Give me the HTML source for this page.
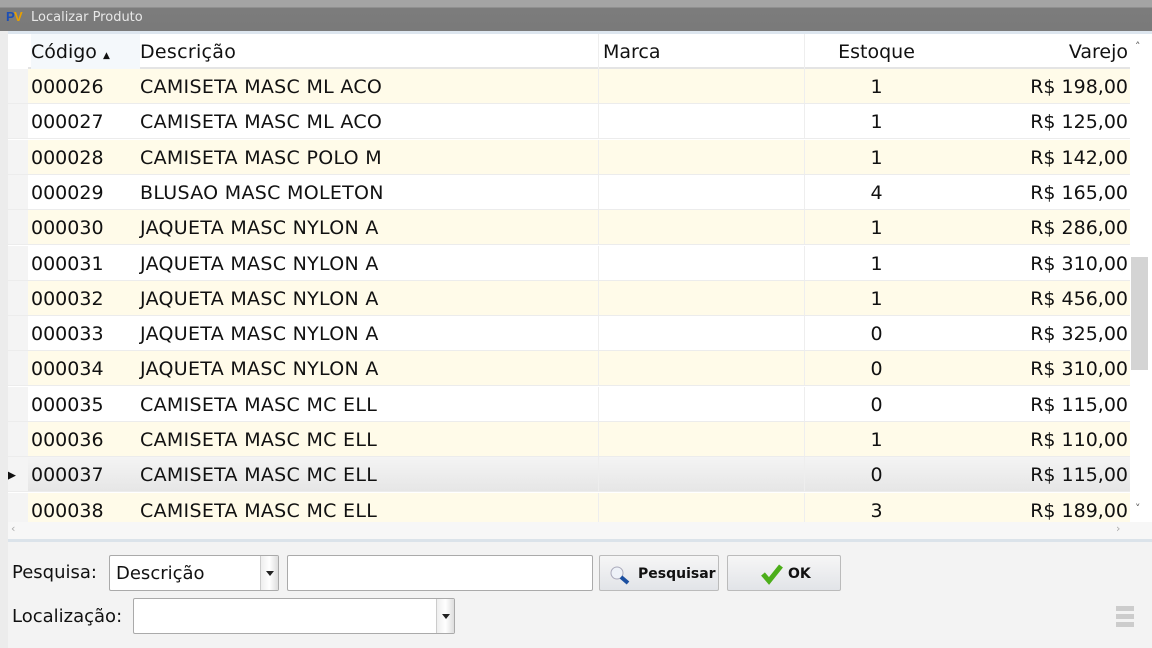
<!DOCTYPE html><html><head><meta charset="utf-8"><style>
*{margin:0;padding:0;box-sizing:border-box}
body{width:1152px;height:648px;overflow:hidden;background:#f3f3f3;font-family:"DejaVu Sans","Liberation Sans",sans-serif;position:relative}
.title{position:absolute;left:0;top:0;width:1152px;height:31px;background:linear-gradient(#a4a4a4 0,#a4a4a4 7px,#7c7c7c 8px,#7a7a7a 30px)}
.title span{position:absolute;left:31px;top:10px;color:#e8e8e8;font-size:13px}
.lb{position:absolute;left:0;top:31px;width:8px;height:617px;background:#ececec}
.grid{position:absolute;left:8px;top:31px;width:1144px;height:510px;background:#fff;border-top:3px solid #dde6ef}
.row{position:absolute;left:0;width:1122px;height:35px;font-size:19px;color:#111;line-height:37px;border-bottom:1px solid #ececec}
.row div{position:absolute;top:0;height:35px;white-space:nowrap}
.c0{left:0;width:20px;background:#f4f4f4}
.c1{left:23px}.c2{left:132px;letter-spacing:0.3px}.c3{left:590px;width:207px;height:35px;border-left:1px solid #eee;border-right:1px solid #eee}
.c4{left:797px;width:143px;text-align:center}.c5{left:940px;width:180px;text-align:right}
.y{background:#fffbe9}
.hdr{background:#fff;border-bottom:2px solid #e4e4e4;top:3px}
.sel{background:linear-gradient(#f4f4f4,#e6e6e6)}
.sb{position:absolute;left:1122px;top:0;width:22px;height:490px;background:#fff}
.thumb{position:absolute;left:1123px;top:223px;width:17px;height:113px;background:#d4d4d4}
.hs{position:absolute;left:0;top:488px;width:1144px;height:20px;background:#f7f7f7;border-bottom:3px solid #dbe3ea}
.lbl{position:absolute;font-size:18px;color:#111}
.box{position:absolute;background:#fff;border:1px solid #aaa;border-radius:2px}
.dd{position:absolute;right:0;top:0;width:18px;height:100%;background:linear-gradient(90deg,#eee,#fff,#ddd);border-left:1px solid #ccc}
.dd:after{content:"";position:absolute;left:5px;top:15px;border:4px solid transparent;border-top:5px solid #222}
.btn{position:absolute;border:1px solid #bbb;border-radius:2px;background:linear-gradient(#f6f6f6,#e2e4e8);font-weight:bold;font-size:14px;color:#111}
</style></head><body>
<div class="title"><svg style="position:absolute;left:6px;top:9px" width="20" height="14"><text x="0" y="12" font-size="13" font-weight="bold" fill="#1d4fb5" font-family="Liberation Sans">P</text><text x="8" y="12" font-size="13" font-weight="bold" fill="#e8a000" font-family="Liberation Sans">V</text></svg><span>Localizar Produto</span></div>
<div class="lb"></div>
<div class="grid">
<div class="row hdr" style="top:0;height:35px"><div class="c0" style="background:#fff"></div><div class="c1" style="width:109px;background:#f4f8fb">Código <span style="font-size:9px">▲</span></div><div class="c2">Descrição</div><div class="c3" style="padding-left:4px">Marca</div><div class="c4">Estoque</div><div class="c5">Varejo</div></div>
</div>
<div id="rows" style="position:absolute;left:8px;top:34px"></div>
<div style="position:absolute;left:8px;top:34px;width:1144px;height:508px;pointer-events:none">
<div class="sb" style="top:0"></div><div class="thumb"></div>
<div style="position:absolute;left:1127px;top:6px;font-size:11px;color:#555">˄</div>
<div style="position:absolute;left:1127px;top:468px;font-size:11px;color:#555">˅</div>
<div class="hs"><span style="position:absolute;left:3px;top:0;font-size:11px;color:#aaa">‹</span><span style="position:absolute;left:1108px;top:0;font-size:11px;color:#aaa">›</span></div>
</div>
<div class="lbl" style="left:12px;top:562px">Pesquisa:</div>
<div class="box" style="left:109px;top:555px;width:170px;height:36px"><span class="lbl" style="left:6px;top:7px">Descrição</span><div class="dd"></div></div>
<div class="box" style="left:287px;top:555px;width:306px;height:36px"></div>
<div class="btn" style="left:599px;top:555px;width:120px;height:36px"><svg style="position:absolute;left:9px;top:8px" width="22" height="22"><circle cx="8" cy="9" r="6" fill="#eef2f8" stroke="#aab" /><line x1="12" y1="13" x2="19" y2="19" stroke="#1b4fa0" stroke-width="4"/></svg><span style="position:absolute;left:38px;top:10px">Pesquisar</span></div>
<div class="btn" style="left:727px;top:555px;width:114px;height:36px"><svg style="position:absolute;left:32px;top:6px" width="24" height="24"><path d="M3 12 L9 19 L21 4" stroke="#4cae1a" stroke-width="5" fill="none"/></svg><span style="position:absolute;left:60px;top:10px">OK</span></div>
<div class="lbl" style="left:12px;top:606px">Localização:</div>
<div class="box" style="left:133px;top:598px;width:322px;height:36px"><div class="dd"></div></div>
<div style="position:absolute;left:1116px;top:606px;width:18px;height:24px;background:repeating-linear-gradient(#ccc 0,#ccc 5px,#f3f3f3 5px,#f3f3f3 8px)"></div>
<script>
var d=[["000026","CAMISETA MASC ML ACO","1","198,00"],["000027","CAMISETA MASC ML ACO","1","125,00"],["000028","CAMISETA MASC POLO M","1","142,00"],["000029","BLUSAO MASC MOLETON","4","165,00"],["000030","JAQUETA MASC NYLON A","1","286,00"],["000031","JAQUETA MASC NYLON A","1","310,00"],["000032","JAQUETA MASC NYLON A","1","456,00"],["000033","JAQUETA MASC NYLON A","0","325,00"],["000034","JAQUETA MASC NYLON A","0","310,00"],["000035","CAMISETA MASC MC ELL","0","115,00"],["000036","CAMISETA MASC MC ELL","1","110,00"],["000037","CAMISETA MASC MC ELL","0","115,00"],["000038","CAMISETA MASC MC ELL","3","189,00"]];
var h="";d.forEach(function(r,i){var c=i==11?"sel":(i%2==0?"y":"");var t=35+i*35.3;var hh=i==12?33:35;h+='<div class="row '+c+'" style="top:'+t+'px;height:'+hh+'px;overflow:hidden"><div class="c0">'+(i==11?'<span style="font-size:13px;position:absolute;left:-2px">▶</span>':'')+'</div><div class="c1">'+r[0]+'</div><div class="c2">'+r[1]+'</div><div class="c3"></div><div class="c4">'+r[2]+'</div><div class="c5">R$ '+r[3]+'</div></div>'});document.getElementById("rows").innerHTML=h;
</script>
</body></html>
